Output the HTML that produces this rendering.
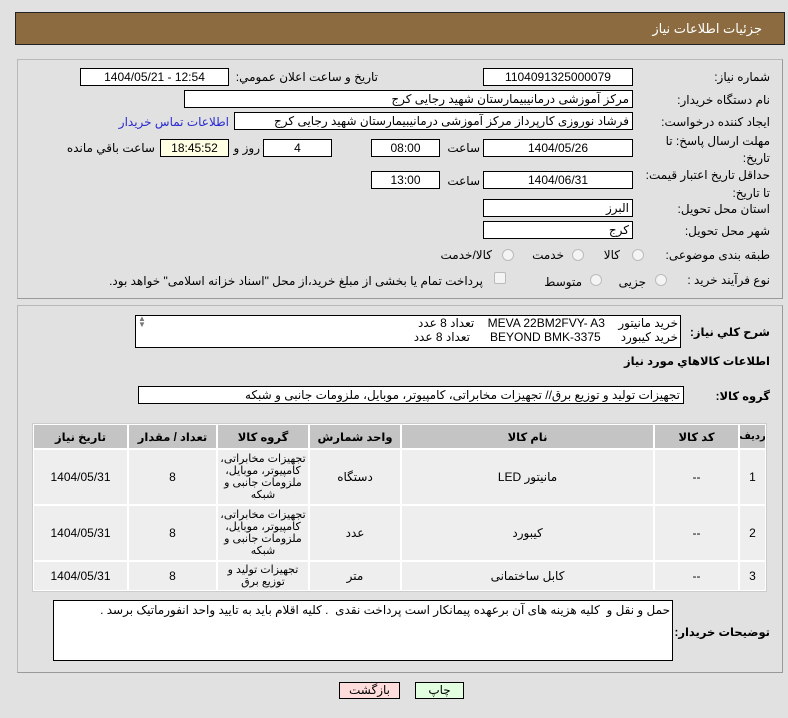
<!DOCTYPE html>
<html><head><meta charset="utf-8"><style>
body{margin:0;width:788px;height:718px;background:#e1e1e1;font-family:"Liberation Sans","DejaVu Sans",sans-serif;font-size:12px;color:#000;position:relative;overflow:hidden}
.a{position:absolute;white-space:nowrap}
.hdr{position:absolute;left:15px;top:12px;width:768px;height:31px;background:#8b6b3f;border:1px solid #222}
.hdr span{position:absolute;right:22px;top:8px;color:#fff;font-size:13px}
.panel{position:absolute;left:17px;width:764px;border:1px solid #b8b8b8;border-right-color:#999;border-bottom-color:#999}
.box{position:absolute;background:#fff;border:1px solid #000;box-sizing:border-box;text-align:center;line-height:16px;font-size:12px;white-space:nowrap;overflow:hidden}
.r{text-align:right;padding-right:3px}
.lbl{position:absolute;text-align:right;white-space:nowrap;direction:rtl}
.b{font-weight:bold;font-size:11.5px}
.rad{position:absolute;width:10px;height:10px;border:1px solid #bbb;border-radius:50%;background:#f4f4f4}
.c{position:absolute;background:#eeeeee;display:flex;align-items:center;justify-content:center;text-align:center;direction:rtl;font-size:12px;overflow:hidden}
.h{background:#c4c4c4;font-weight:bold;font-size:11.5px}
.g{line-height:12px;font-size:11px;padding:0 1px;box-sizing:border-box}
.btn{position:absolute;top:682px;height:15px;border:1px solid #000;text-align:center;font-size:12px;line-height:15px}
</style></head><body>
<div class="hdr"><span>جزئيات اطلاعات نياز</span></div>
<div class="panel" style="top:59px;height:238px"></div>
<div class="panel" style="top:305px;height:366px"></div>

<div class="lbl" style="right:18px;top:70px">شماره نیاز:</div>
<div class="box" style="left:483px;top:68px;width:150px;height:18px">1104091325000079</div>
<div class="lbl" style="right:410px;top:70px">تاريخ و ساعت اعلان عمومي:</div>
<div class="box" style="left:80px;top:68px;width:149px;height:18px">1404/05/21 - 12:54</div>

<div class="lbl" style="right:18px;top:93px">نام دستگاه خریدار:</div>
<div class="box r" style="left:184px;top:90px;width:449px;height:18px">مرکز آموزشی درمانیبیمارستان شهید رجایی کرج</div>

<div class="lbl" style="right:18px;top:115px">ایجاد کننده درخواست:</div>
<div class="box r" style="left:234px;top:112px;width:399px;height:18px">فرشاد نوروزی کارپرداز مرکز آموزشی درمانیبیمارستان شهید رجایی کرج</div>
<div class="lbl" style="right:559px;top:115px;color:#2a2ad0">اطلاعات تماس خریدار</div>

<div class="lbl" style="right:18px;top:133px;line-height:17px">مهلت ارسال پاسخ: تا<br>تاریخ:</div>
<div class="box" style="left:483px;top:139px;width:150px;height:18px">1404/05/26</div>
<div class="lbl" style="right:308px;top:141px">ساعت</div>
<div class="box" style="left:371px;top:139px;width:69px;height:18px">08:00</div>
<div class="box" style="left:263px;top:139px;width:69px;height:18px">4</div>
<div class="lbl" style="right:528px;top:141px">روز و</div>
<div class="box" style="left:160px;top:139px;width:69px;height:18px;background:#ffffe4">18:45:52</div>
<div class="lbl" style="right:633px;top:141px">ساعت باقي مانده</div>

<div class="lbl" style="right:18px;top:166px;line-height:18px">حداقل تاریخ اعتبار قیمت:<br>تا تاریخ:</div>
<div class="box" style="left:483px;top:171px;width:150px;height:18px">1404/06/31</div>
<div class="lbl" style="right:308px;top:174px">ساعت</div>
<div class="box" style="left:371px;top:171px;width:69px;height:18px">13:00</div>

<div class="lbl" style="right:18px;top:202px">استان محل تحویل:</div>
<div class="box r" style="left:483px;top:199px;width:150px;height:18px">البرز</div>
<div class="lbl" style="right:18px;top:224px">شهر محل تحویل:</div>
<div class="box r" style="left:483px;top:221px;width:150px;height:18px">کرج</div>

<div class="lbl" style="right:18px;top:248px">طبقه بندی موضوعی:</div>
<div class="rad" style="left:632px;top:249px"></div><div class="lbl" style="right:168px;top:248px">کالا</div>
<div class="rad" style="left:572px;top:249px"></div><div class="lbl" style="right:224px;top:248px">خدمت</div>
<div class="rad" style="left:502px;top:249px"></div><div class="lbl" style="right:296px;top:248px">کالا/خدمت</div>

<div class="lbl" style="right:18px;top:273px">نوع فرآیند خرید :</div>
<div class="rad" style="left:655px;top:274px"></div><div class="lbl" style="right:142px;top:275px">جزیی</div>
<div class="rad" style="left:590px;top:274px"></div><div class="lbl" style="right:206px;top:275px">متوسط</div>
<div class="rad" style="left:494px;top:272px;border-radius:2px"></div>
<div class="lbl" style="right:305px;top:274px">پرداخت تمام یا بخشی از مبلغ خرید،از محل "اسناد خزانه اسلامی" خواهد بود.</div>

<div class="lbl b" style="right:18px;top:325px">شرح کلي نياز:</div>
<div class="box" style="left:135px;top:315px;width:546px;height:33px;text-align:right;direction:rtl;padding-right:2px;line-height:14px">خرید مانیتور&nbsp;&nbsp;&nbsp; MEVA 22BM2FVY- A3&nbsp;&nbsp;&nbsp; تعداد 8 عدد<br>خرید کیبورد&nbsp;&nbsp;&nbsp;&nbsp;&nbsp; BEYOND BMK-3375&nbsp;&nbsp;&nbsp;&nbsp;&nbsp; تعداد 8 عدد</div>
<div class="a" style="left:138px;top:316px;font-size:8px;color:#777;line-height:6px">▲<br>▼</div>

<div class="lbl b" style="right:18px;top:354px">اطلاعات کالاهاي مورد نياز</div>
<div class="lbl b" style="right:18px;top:389px">گروه کالا:</div>
<div class="box r" style="left:138px;top:386px;width:546px;height:18px;direction:rtl">تجهیزات تولید و توزیع برق// تجهیزات مخابراتی، کامپیوتر، موبایل، ملزومات جانبی و شبکه</div>

<div style="position:absolute;left:32px;top:423px;width:735px;height:169px;background:#fff;border:1px solid #ccc;box-sizing:border-box"></div>
<div class="c h" style="left:740px;top:425px;width:25px;height:23px;font-size:10px">رديف</div>
<div class="c h" style="left:655px;top:425px;width:83px;height:23px">کد کالا</div>
<div class="c h" style="left:402px;top:425px;width:251px;height:23px">نام کالا</div>
<div class="c h" style="left:310px;top:425px;width:90px;height:23px">واحد شمارش</div>
<div class="c h" style="left:218px;top:425px;width:90px;height:23px">گروه کالا</div>
<div class="c h" style="left:129px;top:425px;width:87px;height:23px">تعداد / مقدار</div>
<div class="c h" style="left:34px;top:425px;width:93px;height:23px">تاریخ نیاز</div>

<div class="c" style="left:740px;top:450px;width:25px;height:54px">1</div>
<div class="c" style="left:655px;top:450px;width:83px;height:54px">--</div>
<div class="c" style="left:402px;top:450px;width:251px;height:54px">مانیتور LED</div>
<div class="c" style="left:310px;top:450px;width:90px;height:54px">دستگاه</div>
<div class="c g" style="left:218px;top:450px;width:90px;height:54px">تجهیزات مخابراتی، کامپیوتر، موبایل، ملزومات جانبی و شبکه</div>
<div class="c" style="left:129px;top:450px;width:87px;height:54px">8</div>
<div class="c" style="left:34px;top:450px;width:93px;height:54px">1404/05/31</div>

<div class="c" style="left:740px;top:506px;width:25px;height:54px">2</div>
<div class="c" style="left:655px;top:506px;width:83px;height:54px">--</div>
<div class="c" style="left:402px;top:506px;width:251px;height:54px">کیبورد</div>
<div class="c" style="left:310px;top:506px;width:90px;height:54px">عدد</div>
<div class="c g" style="left:218px;top:506px;width:90px;height:54px">تجهیزات مخابراتی، کامپیوتر، موبایل، ملزومات جانبی و شبکه</div>
<div class="c" style="left:129px;top:506px;width:87px;height:54px">8</div>
<div class="c" style="left:34px;top:506px;width:93px;height:54px">1404/05/31</div>

<div class="c" style="left:740px;top:562px;width:25px;height:28px">3</div>
<div class="c" style="left:655px;top:562px;width:83px;height:28px">--</div>
<div class="c" style="left:402px;top:562px;width:251px;height:28px">کابل ساختمانی</div>
<div class="c" style="left:310px;top:562px;width:90px;height:28px">متر</div>
<div class="c g" style="left:218px;top:562px;width:90px;height:28px">تجهیزات تولید و توزیع برق</div>
<div class="c" style="left:129px;top:562px;width:87px;height:28px">8</div>
<div class="c" style="left:34px;top:562px;width:93px;height:28px">1404/05/31</div>

<div class="lbl b" style="right:18px;top:625px">توضیحات خریدار:</div>
<div class="box" style="left:53px;top:600px;width:620px;height:61px;text-align:right;direction:rtl;padding-right:2px;line-height:18px">حمل و نقل و&nbsp; کلیه هزینه های آن برعهده پیمانکار است پرداخت نقدی&nbsp; . کلیه اقلام باید به تایید واحد انفورماتیک برسد .</div>

<div class="btn" style="left:339px;width:59px;background:#ffdcdc">بازگشت</div>
<div class="btn" style="left:415px;width:47px;background:#e2ffe0">چاپ</div>
</body></html>
